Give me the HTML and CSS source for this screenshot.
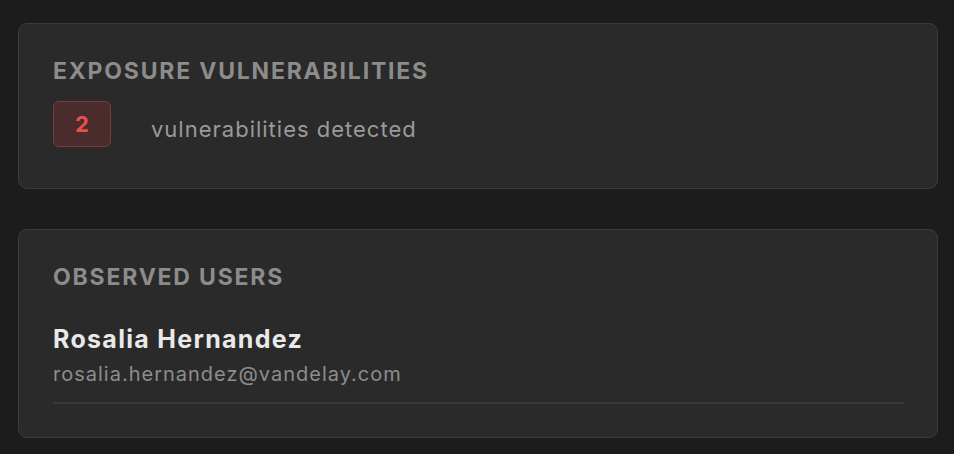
FILE: index.html
```html
<!DOCTYPE html>
<html>
<head>
<meta charset="utf-8">
<link rel="stylesheet" href="styles.css">
</head>
<body>
<main class="page">
  <section class="card">
    <h2 class="card-title">Exposure Vulnerabilities</h2>
    <div class="vuln-row">
      <span class="badge">2</span>
      <span class="vuln-text">vulnerabilities detected</span>
    </div>
  </section>
  <section class="card card-users">
    <h2 class="card-title">Observed Users</h2>
    <div class="user">
      <div class="user-name">Rosalia Hernandez</div>
      <div class="user-email">rosalia.hernandez@vandelay.com</div>
    </div>
  </section>
</main>
</body>
</html>
```
FILE: styles.css
```css
html, body {
  margin: 0;
  padding: 0;
  background: #1c1c1c;
}
body {
  font-family: Inter, "Noto Sans", sans-serif;
}
.page {
  padding: 23px 16px 0 18px;
  display: flex;
  flex-direction: column;
  gap: 40px;
}
.card {
  background: #2a2a2a;
  border: 1.5px solid #3c3c3c;
  border-radius: 9px;
  padding: 34px 33px 41px 34px;
}
.card-users {
  padding-bottom: 33px;
}
.card-title {
  margin: 0;
  font-size: 23px;
  line-height: 27px;
  font-weight: 700;
  letter-spacing: 1.8px;
  text-transform: uppercase;
  color: #8c8c8c;
}
.vuln-row {
  margin-top: 15.5px;
  display: flex;
  align-items: flex-start;
  gap: 40px;
}
.badge {
  box-sizing: border-box;
  width: 58px;
  height: 46px;
  display: flex;
  align-items: center;
  justify-content: center;
  background: #4a2c2c;
  border: 1.5px solid #7e3a38;
  border-radius: 6px;
  color: #e8504c;
  font-weight: 700;
  font-size: 22px;
}
.vuln-text {
  margin-top: 15px;
  font-size: 22px;
  line-height: 26px;
  letter-spacing: 1px;
  color: #9a9a9a;
}
.user {
  margin-top: 33px;
  padding-bottom: 15px;
  border-bottom: 2px solid #383838;
}
.user-name {
  font-size: 25px;
  line-height: 30px;
  font-weight: 700;
  letter-spacing: 1.3px;
  color: #e9e9e9;
}
.user-email {
  margin-top: 7px;
  font-size: 20px;
  line-height: 26px;
  letter-spacing: 1px;
  color: #8d8d8d;
}
```
